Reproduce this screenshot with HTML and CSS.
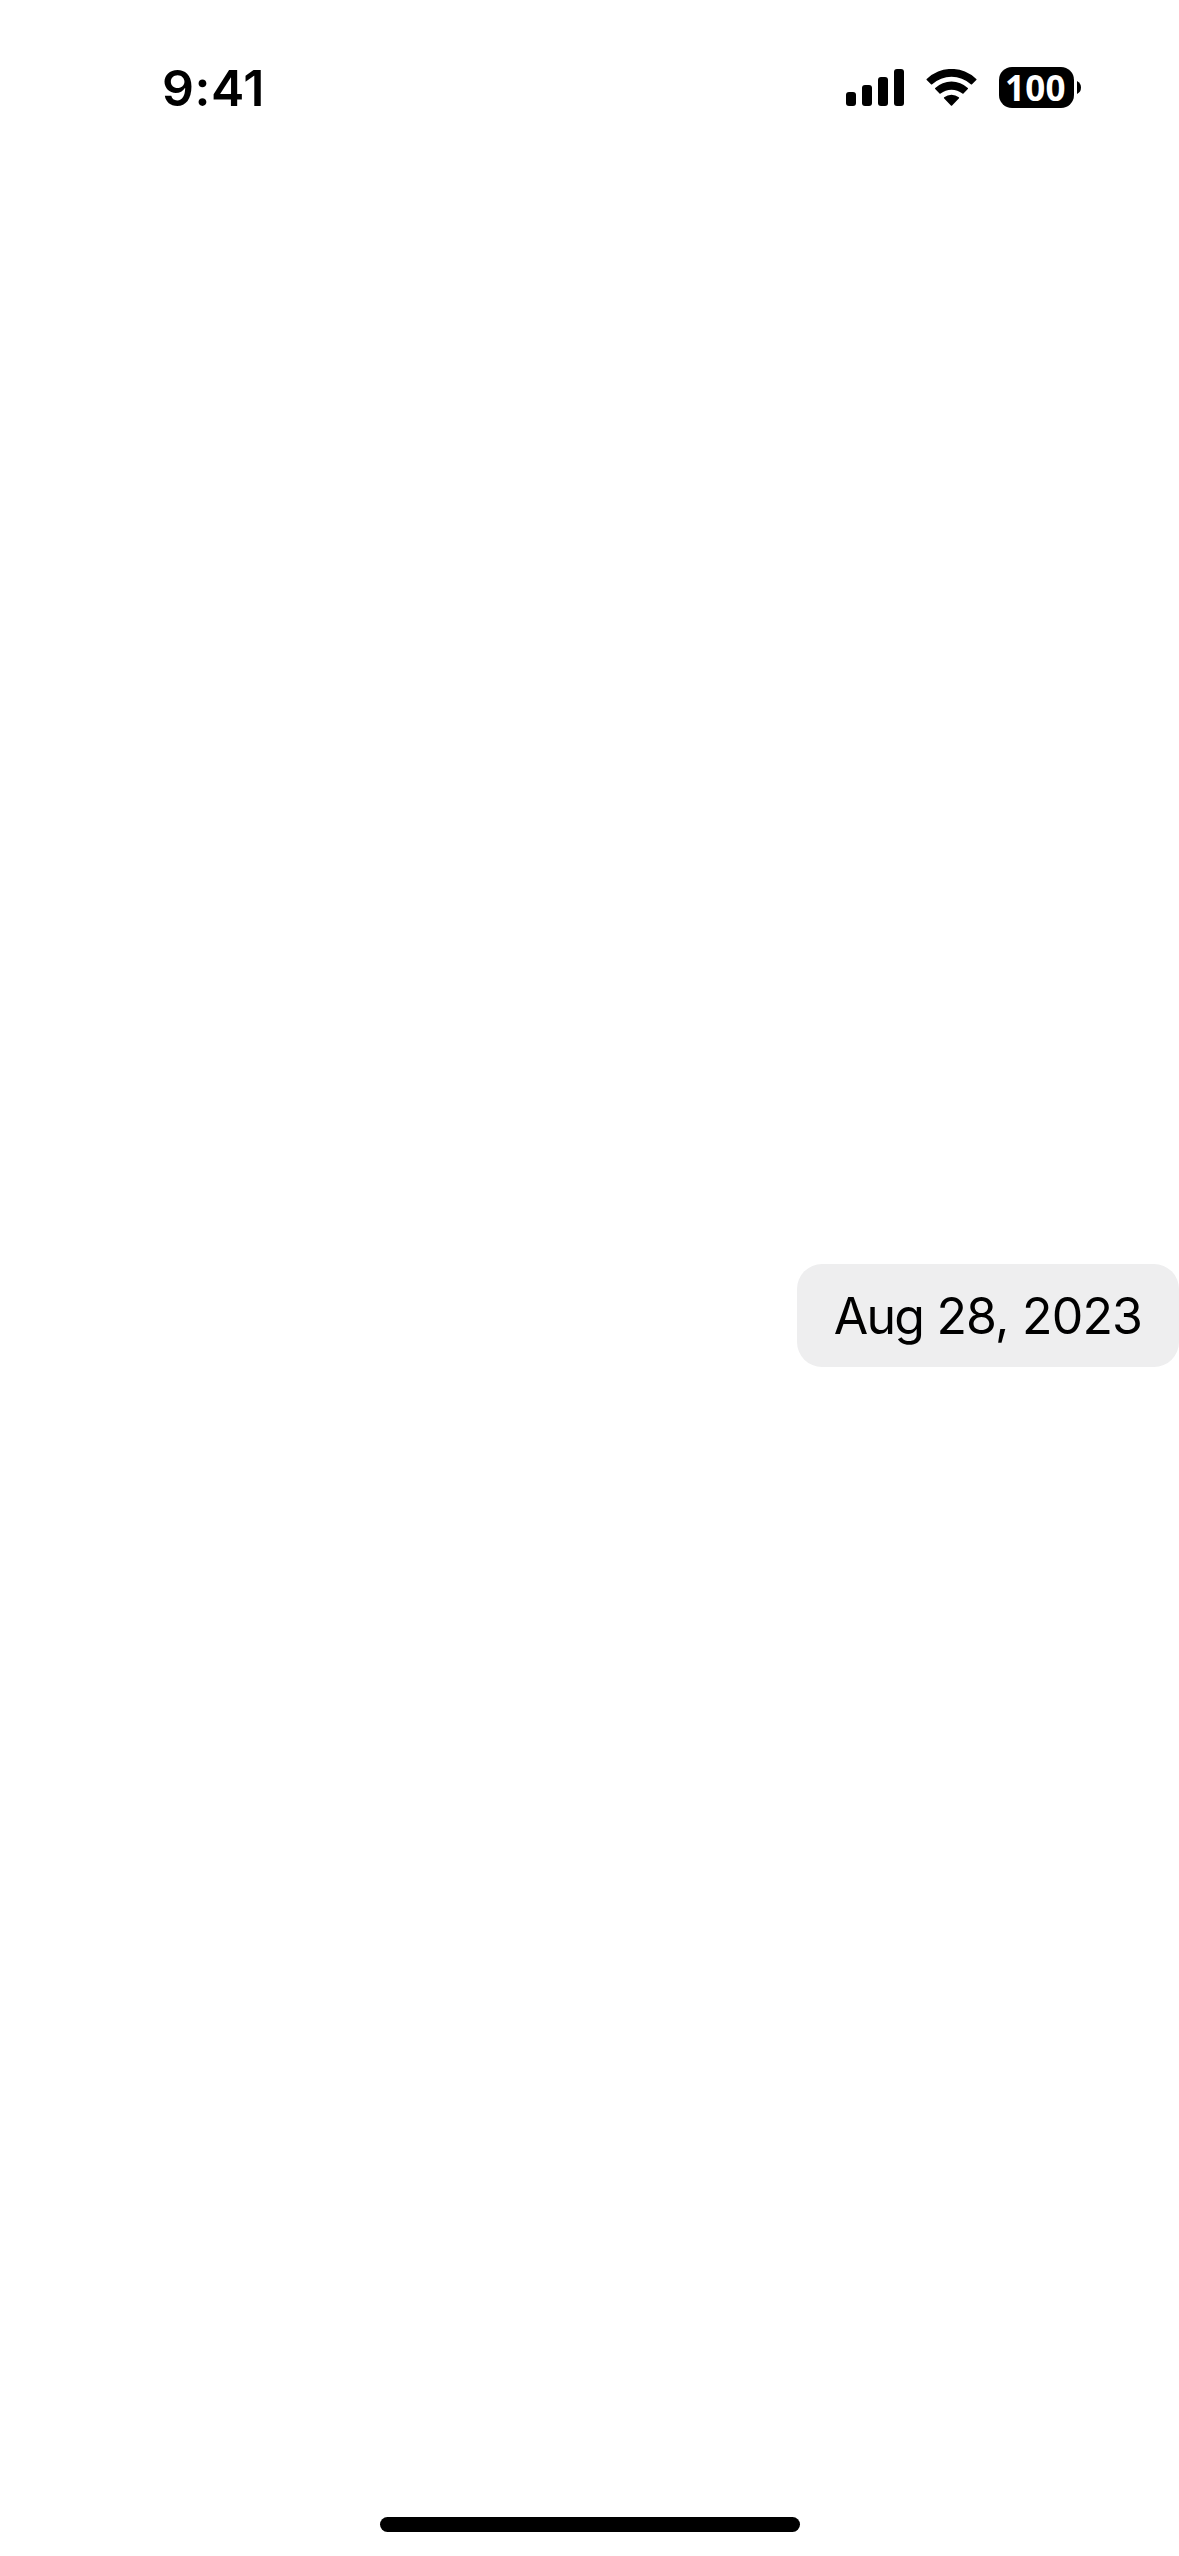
FILE: index.html
```html
<!DOCTYPE html>
<html lang="en">
<head>
<meta charset="utf-8">
<meta name="viewport" content="width=device-width">
<title>Date</title>
<link rel="stylesheet" href="styles.css">
</head>
<body>
<div class="screen">
  <header class="status-bar">
    <time class="clock">9:41</time>
    <div class="indicators">
      <svg class="signal" viewBox="0 0 58 37" aria-hidden="true">
        <rect x="0" y="23" width="10" height="14" rx="3"/>
        <rect x="16" y="16" width="10" height="21" rx="3"/>
        <rect x="32" y="8" width="10" height="29" rx="3"/>
        <rect x="48" y="0" width="10" height="37" rx="3"/>
      </svg>
      <svg class="wifi" viewBox="0 0 51 37" aria-hidden="true">
        <path d="M.7 10A35.5 35.5 0 0 1 50.3 10Q50.8 10.5 50.3 11L46 15.2Q45.4 15.7 44.8 15.2A29 29 0 0 0 6.2 15.2Q5.600 15.700 5 15.200L.7 11Q.2 10.500 .7 10Z"/>
        <path d="M9.200 19A24 24 0 0 1 41.800 19Q42.400 19.500 41.800 20L37.500 24.500Q37 25 36.400 24.500A17.500 17.500 0 0 0 14.600 24.500Q14 25 13.500 24.500L9.200 20Q8.600 19.500 9.200 19Z"/>
        <path d="M18.200 28.300A11.500 11.500 0 0 1 32.800 28.300Q33.400 28.900 32.800 29.500L26.100 36.500Q25.500 37.100 24.900 36.500L18.200 29.500Q17.600 28.900 18.200 28.300Z"/>
      </svg>
      <div class="battery">
        <span class="battery-level">100</span>
        <svg class="battery-cap" viewBox="0 0 4 13" aria-hidden="true"><path d="M0 0Q4 2 4 6.500Q4 11 0 13Z"/></svg>
      </div>
    </div>
  </header>
  <main class="content">
    <button class="date-chip" type="button"><span class="month">Aug</span> 28, 2023</button>
  </main>
  <footer class="home-area"><div class="home-indicator"></div></footer>
</div>
</body>
</html>
```

FILE: styles.css
```css
* { box-sizing: border-box; }

body {
  margin: 0;
  background: #fff;
  color: #000;
  font-family: Inter, "Liberation Sans", sans-serif;
}

.screen {
  display: flex;
  flex-direction: column;
  height: 2556px;
}

.status-bar {
  display: flex;
  justify-content: space-between;
  height: 177px;
  padding: 67px 98px 0 162px;
}

.clock {
  height: 41px;
  font-size: 50px;
  font-weight: 570;
  line-height: 42px;
  letter-spacing: 0.5px;
}

.indicators {
  display: flex;
  align-items: flex-start;
}

.signal {
  width: 58px;
  height: 37px;
  margin: 2px 22px 0 0;
}

.wifi {
  width: 51px;
  height: 37px;
  margin: 2px 22px 0 0;
}

.battery {
  display: flex;
  align-items: center;
  gap: 3px;
}

.battery-level {
  width: 75px;
  height: 41px;
  padding-left: 6px;
  border-radius: 13px;
  background: #000;
  color: #fff;
  font-family: "Open Sans", "Noto Sans", sans-serif;
  font-size: 35px;
  font-weight: 700;
  line-height: 41px;
  letter-spacing: 0.2px;
}

.battery-cap {
  width: 4px;
  height: 13px;
}

.content {
  display: flex;
  flex: 1;
  justify-content: flex-end;
  align-items: flex-start;
  padding-top: 1087px;
}

.date-chip {
  width: 382px;
  height: 103px;
  padding: 1px 0 0;
  border: 0;
  border-radius: 25px;
  background: #eeeeef;
  color: #000;
  font: 400 50px/102px Inter, "Liberation Sans", sans-serif;
  letter-spacing: -0.8px;
  text-align: center;
  white-space: nowrap;
}

.month {
  letter-spacing: -1.8px;
}

.home-area {
  display: flex;
  justify-content: center;
  padding: 0 0 24px 1px;
}

.home-indicator {
  width: 420px;
  height: 15px;
  border-radius: 8px;
  background: #000;
}
```
